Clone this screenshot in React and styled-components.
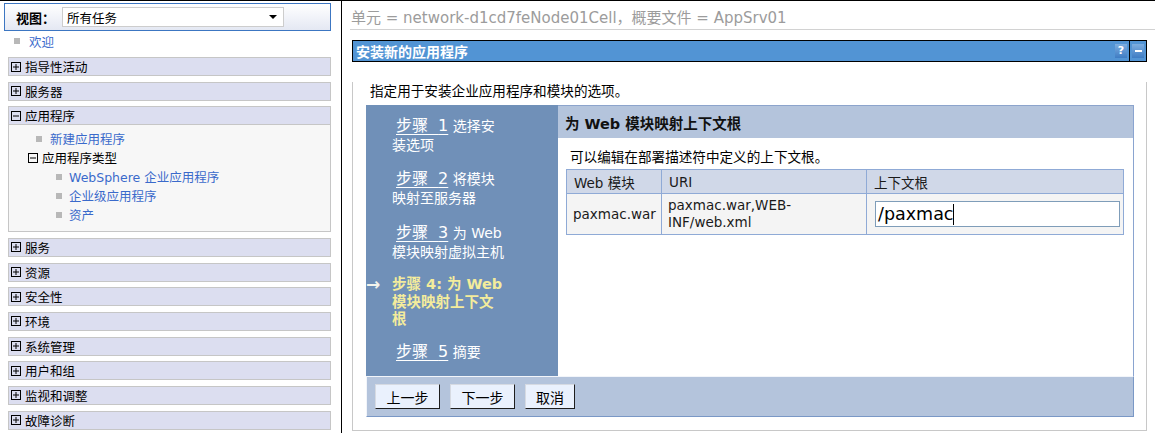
import React from "react";
import styled, { createGlobalStyle } from "styled-components";

const GlobalStyle = createGlobalStyle`
  html, body {
    margin: 0;
    padding: 0;
    background: #ffffff;
  }
  body {
    font-family: "DejaVu Sans", "Noto Sans CJK SC", sans-serif;
  }
`;

const collapsed = ["指导性活动", "服务器"];
const collapsedAfter = ["服务", "资源", "安全性", "环境", "系统管理", "用户和组", "监视和调整", "故障诊断"];

const steps = [
  { n: 1, text: "选择安装选项" },
  { n: 2, text: "将模块映射至服务器" },
  { n: 3, text: "为 Web 模块映射虚拟主机" },
  { n: 4, text: "为 Web 模块映射上下文根", current: true },
  { n: 5, text: "摘要" },
];

const TreeBox = ({ open }) => (
  <svg width="10" height="10" viewBox="0 0 10 10">
    <rect x="0.5" y="0.5" width="9" height="9" fill="none" stroke="#000" />
    <line x1="2" y1="5" x2="8" y2="5" stroke="#000" />
    {!open && <line x1="5" y1="2" x2="5" y2="8" stroke="#000" />}
  </svg>
);

const NavSection = ({ title, open, children }) => (
  <Section>
    <Bar>
      <TreeBox open={open} />
      <span>{title}</span>
    </Bar>
    {open && <SectionBody>{children}</SectionBody>}
  </Section>
);

const App = () => {
  return (
    <Page>
      <GlobalStyle />
      <Nav>
        <ViewBox>
          <ViewLabel>视图：</ViewLabel>
          <FakeSelect>
            <span>所有任务</span>
            <Caret />
          </FakeSelect>
        </ViewBox>
        <Welcome>
          <Bullet />
          <NavLink>欢迎</NavLink>
        </Welcome>
        <Sections>
          {collapsed.map((t) => (
            <NavSection key={t} title={t} />
          ))}
          <NavSection title="应用程序" open>
            <TreeRow $indent={27} $gap={8}>
              <Bullet />
              <NavLink>新建应用程序</NavLink>
            </TreeRow>
            <TreeRow $indent={19} $gap={4}>
              <TreeBox open />
              <span>应用程序类型</span>
            </TreeRow>
            <TreeRow $indent={47} $gap={7}>
              <Bullet />
              <NavLink>WebSphere 企业应用程序</NavLink>
            </TreeRow>
            <TreeRow $indent={47} $gap={7}>
              <Bullet />
              <NavLink>企业级应用程序</NavLink>
            </TreeRow>
            <TreeRow $indent={47} $gap={7}>
              <Bullet />
              <NavLink>资产</NavLink>
            </TreeRow>
          </NavSection>
          {collapsedAfter.map((t) => (
            <NavSection key={t} title={t} />
          ))}
        </Sections>
      </Nav>

      <Content>
        <CellHeader>单元 = network-d1cd7feNode01Cell，概要文件 = AppSrv01</CellHeader>
        <Panel>
          <TitleBar>
            <TitleText>安装新的应用程序</TitleText>
            <IconCell>
              <HelpIcon>?</HelpIcon>
            </IconCell>
            <IconCell $divider>
              <MinIcon />
            </IconCell>
          </TitleBar>
          <PanelBody>
            <Intro>指定用于安装企业应用程序和模块的选项。</Intro>
            <Wizard>
              <Steps>
                {steps.map((s) => (
                  <Step key={s.n} $current={s.current}>
                    <Arrow>{s.current ? "→" : ""}</Arrow>
                    {s.current ? (
                      <CurrentText>
                        步骤 {s.n}: {s.text}
                      </CurrentText>
                    ) : (
                      <StepText>
                        <StepLink>步骤 {s.n}</StepLink> {s.text}
                      </StepText>
                    )}
                  </Step>
                ))}
              </Steps>
              <Pane>
                <PaneHeader>为 Web 模块映射上下文根</PaneHeader>
                <PaneBody>
                  <Desc>可以编辑在部署描述符中定义的上下文根。</Desc>
                  <Table>
                    <colgroup>
                      <col style={{ width: 95 }} />
                      <col style={{ width: 205 }} />
                      <col style={{ width: 257 }} />
                    </colgroup>
                    <thead>
                      <tr>
                        <Th>Web 模块</Th>
                        <Th>URI</Th>
                        <Th>上下文根</Th>
                      </tr>
                    </thead>
                    <tbody>
                      <tr>
                        <Td>paxmac.war</Td>
                        <Td>paxmac.war,WEB-INF/web.xml</Td>
                        <InputCell>
                          <TextBox>
                            /paxmac<TextCaret />
                          </TextBox>
                        </InputCell>
                      </tr>
                    </tbody>
                  </Table>
                </PaneBody>
              </Pane>
              <ButtonBar>
                <Button $w={65}>上一步</Button>
                <Button $w={65}>下一步</Button>
                <Button $w={50}>取消</Button>
              </ButtonBar>
            </Wizard>
          </PanelBody>
        </Panel>
      </Content>
    </Page>
  );
};

export default App;

const Page = styled.div`
  display: flex;
  height: 433px;
  box-sizing: border-box;
  border-top: 1px solid #000;
  overflow: hidden;
  background: #fff;
`;

const Nav = styled.nav`
  width: 342px;
  flex-shrink: 0;
  box-sizing: border-box;
  border-right: 1px solid #000;
  font-family: "DejaVu Sans", "Noto Sans CJK SC", sans-serif;
  font-size: 12.5px;
  color: #000;
`;

const ViewBox = styled.div`
  margin: 2px 0 0 4px;
  width: 327px;
  height: 28px;
  box-sizing: border-box;
  border: 1px solid #3c76c2;
  background: linear-gradient(#ffffff, #e4e8f3);
  display: flex;
  align-items: center;
  padding-left: 11px;
`;

const ViewLabel = styled.span`
  width: 46px;
  font-weight: bold;
  font-size: 13px;
`;

const FakeSelect = styled.div`
  width: 222px;
  height: 20px;
  box-sizing: border-box;
  border: 1px solid #cdcdcd;
  background: #fff;
  display: flex;
  align-items: center;
  justify-content: space-between;
  padding: 0 6px 0 4px;
`;

const Caret = styled.span`
  width: 0;
  height: 0;
  border-left: 4px solid transparent;
  border-right: 4px solid transparent;
  border-top: 4px solid #000;
`;

const Welcome = styled.div`
  margin-top: 2px;
  height: 16px;
  display: flex;
  align-items: center;
  gap: 9px;
  padding-left: 14px;
`;

const Bullet = styled.span`
  width: 6px;
  height: 6px;
  background: #b8b8b8;
  flex-shrink: 0;
`;

const NavLink = styled.span`
  color: #3a6acb;
`;

const Sections = styled.div`
  margin-top: 8px;
`;

const Section = styled.div`
  margin: 0 0 5.67px 8px;
  width: 323px;
`;

const Bar = styled.div`
  height: 19px;
  box-sizing: border-box;
  border: 1px solid #c6c6c6;
  background: #dcdef0;
  display: flex;
  align-items: center;
  gap: 4px;
  padding-left: 2px;
`;

const SectionBody = styled.div`
  box-sizing: border-box;
  border: 1px solid #c6c6c6;
  border-top: none;
  background: #f7f7f7;
  padding: 4px 0 7px;
`;

const TreeRow = styled.div`
  height: 19px;
  display: flex;
  align-items: center;
  padding-left: ${(p) => p.$indent}px;
  gap: ${(p) => p.$gap}px;
`;

const Content = styled.main`
  flex: 1;
  min-width: 0;
`;

const CellHeader = styled.div`
  margin-left: 8px;
  height: 29px;
  box-sizing: border-box;
  padding: 8px 0 0 1px;
  border-bottom: 1px solid #d2d2d2;
  color: #9c9c9c;
  font-size: 15px;
  line-height: 18px;
  white-space: nowrap;
`;

const Panel = styled.section`
  margin: 10px 8px 0 10px;
`;

const TitleBar = styled.div`
  height: 22px;
  box-sizing: border-box;
  border: 1px solid #000;
  background: #5294d4;
  display: flex;
  align-items: stretch;
`;

const TitleText = styled.div`
  flex: 1;
  display: flex;
  align-items: center;
  padding-left: 3px;
  color: #fff;
  font-weight: bold;
  font-size: 14px;
  font-family: "Noto Sans CJK SC", sans-serif;
`;

const IconCell = styled.div`
  display: flex;
  align-items: center;
  padding: 0 2px 0 ${(p) => (p.$divider ? 2 : 0)}px;
  border-left: ${(p) => (p.$divider ? "1px solid #000" : "none")};
`;

const HelpIcon = styled.span`
  width: 12px;
  height: 14px;
  background: linear-gradient(#7eaee0, #3f7cc3);
  color: #fff;
  font-weight: bold;
  font-size: 11px;
  line-height: 14px;
  text-align: center;
`;

const MinIcon = styled.span`
  width: 12px;
  height: 14px;
  background: linear-gradient(#7eaee0, #3f7cc3);
  display: flex;
  align-items: center;
  justify-content: center;

  &::after {
    content: "";
    width: 7px;
    height: 2px;
    background: #fff;
  }
`;

const PanelBody = styled.div`
  border: 1px solid #c8c8c8;
  border-top: none;
  padding: 0 12px 13px 13px;
`;

const Intro = styled.div`
  margin: 20px 0 5px;
  padding-left: 4px;
  font-size: 13.6px;
  line-height: 18px;
  color: #000;
`;

const Wizard = styled.div`
  display: grid;
  grid-template-columns: 192px 1fr;
`;

const Steps = styled.div`
  background: #7090b8;
  padding-top: 11px;
  min-height: 265px;
  box-sizing: border-box;
`;

const Step = styled.div`
  display: grid;
  grid-template-columns: 26px 112px;
  margin-bottom: ${(p) => (p.$current ? 13 : 14.3)}px;
  line-height: ${(p) => (p.$current ? 17.7 : 19)}px;
  color: #fff;
  font-size: 14px;
`;

const Arrow = styled.span`
  color: #f4f4ec;
  font-weight: bold;
  font-size: 17px;
  line-height: 17px;
  padding-left: 0;
`;

const StepText = styled.div`
  text-indent: 4px;
`;

const StepLink = styled.span`
  font-size: 16px;
  word-spacing: 5px;
  text-decoration: underline;
  text-underline-offset: 3px;
`;

const CurrentText = styled.div`
  color: #f4ec9c;
  font-weight: bold;
  font-size: 14.5px;
`;

const Pane = styled.div`
  border-top: 1px solid #8ca4cc;
  border-right: 1px solid #8aa4d0;
  background: #fff;
`;

const PaneHeader = styled.div`
  height: 32px;
  background: #b4c4dc;
  display: flex;
  align-items: center;
  padding-left: 7px;
  font-weight: bold;
  font-size: 14.5px;
  color: #111;
`;

const PaneBody = styled.div`
  padding: 10px 9px 0 8px;
`;

const Desc = styled.div`
  padding-left: 4px;
  margin-bottom: 3px;
  font-size: 13.6px;
  line-height: 18px;
`;

const Table = styled.table`
  width: 557px;
  border-collapse: collapse;
  table-layout: fixed;
  font-size: 13.5px;
  color: #1a1a1a;
`;

const Th = styled.th`
  height: 23px;
  padding: 0 7px;
  background: #d0d8e8;
  border: 1px solid #8faad6;
  text-align: left;
  font-weight: normal;
`;

const Td = styled.td`
  height: 40px;
  padding: 0 6px;
  background: #f4f4f4;
  border: 1px solid #8faad6;
  line-height: 17px;
`;

const InputCell = styled(Td)`
  padding: 0 3px 0 8px;
`;

const TextBox = styled.div`
  height: 26px;
  box-sizing: border-box;
  border: 1px solid #7f9db9;
  background: #fff;
  display: flex;
  align-items: center;
  padding-left: 2px;
  font-size: 17.5px;
  color: #000;
`;

const TextCaret = styled.span`
  width: 1px;
  height: 21px;
  background: #000;
`;

const ButtonBar = styled.div`
  grid-column: 1 / -1;
  height: 41px;
  box-sizing: border-box;
  background: #b4c4dc;
  border-top: 1px solid #f2f5fa;
  border-left: 1px solid #f2f5fa;
  border-right: 1px solid #7a98c6;
  border-bottom: 1px solid #7a98c6;
  display: flex;
  align-items: center;
  gap: 10px;
  padding-left: 8px;
`;

const Button = styled.button`
  width: ${(p) => p.$w}px;
  height: 25px;
  padding: 0;
  background: #eaf1fd;
  border: 1px solid;
  border-color: #d6dae2 #1e1e1e #1e1e1e #d6dae2;
  font-family: "Noto Sans CJK SC", sans-serif;
  font-size: 14px;
  color: #000;
`;
